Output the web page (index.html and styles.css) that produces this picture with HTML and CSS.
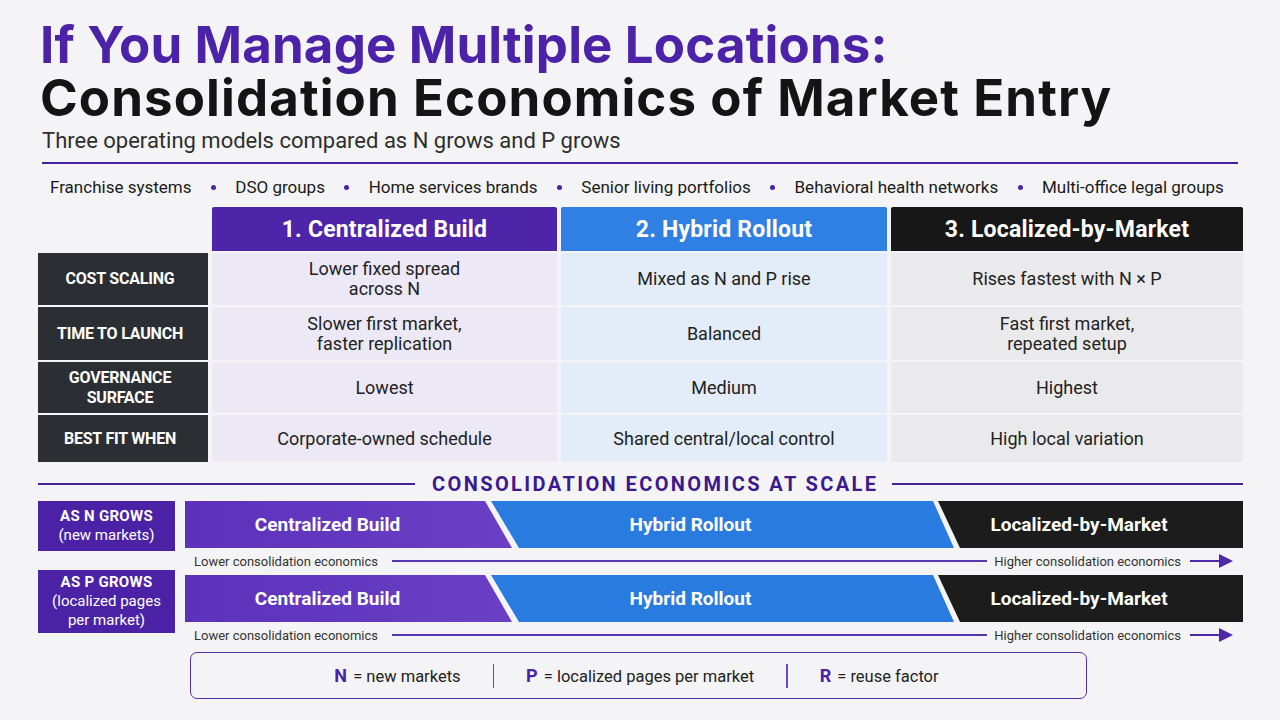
FILE: index.html
```html
<!DOCTYPE html>
<html lang="en">
<head>
<meta charset="utf-8">
<title>Consolidation Economics of Market Entry</title>
<link rel="stylesheet" href="styles.css">
</head>
<body>
<div class="page">
  <h1 class="title"><span class="t1">If You Manage Multiple Locations:</span><span class="t2">Consolidation Economics of Market Entry</span></h1>
  <p class="subtitle">Three operating models compared as N grows and P grows</p>
  <div class="rule"></div>
  <ul class="industries">
    <li>Franchise systems</li><li class="dot"></li>
    <li>DSO groups</li><li class="dot"></li>
    <li>Home services brands</li><li class="dot"></li>
    <li>Senior living portfolios</li><li class="dot"></li>
    <li>Behavioral health networks</li><li class="dot"></li>
    <li>Multi-office legal groups</li>
  </ul>

  <div class="matrix">
    <div class="corner"></div>
    <div class="head h-purple">1. Centralized Build</div>
    <div class="head h-blue">2. Hybrid Rollout</div>
    <div class="head h-black">3. Localized-by-Market</div>

    <div class="label">COST SCALING</div>
    <div class="cell c-purple">Lower fixed spread<br>across N</div>
    <div class="cell c-blue">Mixed as N and P rise</div>
    <div class="cell c-gray">Rises fastest with N × P</div>

    <div class="label">TIME TO LAUNCH</div>
    <div class="cell c-purple">Slower first market,<br>faster replication</div>
    <div class="cell c-blue">Balanced</div>
    <div class="cell c-gray">Fast first market,<br>repeated setup</div>

    <div class="label">GOVERNANCE<br>SURFACE</div>
    <div class="cell c-purple">Lowest</div>
    <div class="cell c-blue">Medium</div>
    <div class="cell c-gray">Highest</div>

    <div class="label">BEST FIT WHEN</div>
    <div class="cell c-purple">Corporate-owned schedule</div>
    <div class="cell c-blue">Shared central/local control</div>
    <div class="cell c-gray">High local variation</div>
  </div>

  <div class="section-head">
    <span class="sh-line sh-left"></span>
    <h2>CONSOLIDATION ECONOMICS AT SCALE</h2>
    <span class="sh-line"></span>
  </div>

  <div class="scale">
    <div class="scale-row row-n">
      <div class="row-label"><b>AS N GROWS</b><span>(new markets)</span></div>
      <div class="track">
        <div class="band">
          <div class="seg seg-c">Centralized Build</div>
          <div class="seg seg-h">Hybrid Rollout</div>
          <div class="seg seg-l">Localized-by-Market</div>
        </div>
        <div class="axis">
          <span>Lower consolidation economics</span>
          <span class="axis-line"></span>
          <span>Higher consolidation economics</span>
          <svg class="arrow" width="44" height="14" viewBox="0 0 44 14"><line x1="0" y1="7" x2="30" y2="7" stroke="#4f28a8" stroke-width="2"/><polygon points="29,0 43,7 29,14" fill="#4f28a8"/></svg>
        </div>
      </div>
    </div>
    <div class="scale-row row-p">
      <div class="row-label"><b>AS P GROWS</b><span>(localized pages<br>per market)</span></div>
      <div class="track">
        <div class="band">
          <div class="seg seg-c">Centralized Build</div>
          <div class="seg seg-h">Hybrid Rollout</div>
          <div class="seg seg-l">Localized-by-Market</div>
        </div>
        <div class="axis">
          <span>Lower consolidation economics</span>
          <span class="axis-line"></span>
          <span>Higher consolidation economics</span>
          <svg class="arrow" width="44" height="14" viewBox="0 0 44 14"><line x1="0" y1="7" x2="30" y2="7" stroke="#4f28a8" stroke-width="2"/><polygon points="29,0 43,7 29,14" fill="#4f28a8"/></svg>
        </div>
      </div>
    </div>
  </div>

  <div class="legend">
    <div class="lg-item"><b>N</b> = new markets</div>
    <span class="lg-div"></span>
    <div class="lg-item"><b>P</b> = localized pages per market</div>
    <span class="lg-div"></span>
    <div class="lg-item"><b>R</b> = reuse factor</div>
  </div>
</div>
</body>
</html>
```

FILE: styles.css
```css
* { box-sizing: border-box; }
html, body { margin: 0; padding: 0; }
body {
  background: #f4f4f6;
  font-family: Roboto, "Liberation Sans", Arial, sans-serif;
  color: #222;
  width: 1280px;
  height: 720px;
  overflow: hidden;
}
.page {
  padding: 18px 37px 0 38px;
}
.title {
  margin: 0;
  font-family: Inter, "Noto Sans", sans-serif;
  font-weight: 700;
  font-size: 51px;
  line-height: 53px;
  padding-left: 2px;
}
.title span { display: block; white-space: nowrap; }
.t1 { color: #4b22a8; letter-spacing: 0.15px; }
.t2 { color: #141414; letter-spacing: 1.1px; }
.subtitle {
  margin: 4px 0 0 4px;
  font-size: 22px;
  line-height: 26px;
  color: #2e2e2e;
}
.rule {
  height: 2px;
  background: #4a1f9e;
  margin: 8px 5px 0 4px;
}
.industries {
  list-style: none;
  margin: 13px 19px 0 12px;
  padding: 0;
  display: flex;
  justify-content: space-between;
  align-items: center;
  font-size: 17px;
  line-height: 20px;
  color: #1a1a1a;
}
.industries .dot {
  width: 5px;
  height: 5px;
  border-radius: 50%;
  background: #4b22a8;
}

/* matrix */
.matrix {
  margin-top: 10px;
  display: grid;
  grid-template-columns: 170px 345px 326px 352px;
  grid-template-rows: 44px 52px 53px 51px 47px;
  column-gap: 4px;
  row-gap: 2px;
}
.head {
  display: flex;
  align-items: center;
  justify-content: center;
  color: #fff;
  font-weight: 700;
  font-size: 23px;
  letter-spacing: 0.2px;
  border-radius: 2px 2px 0 0;
}
.h-purple { background: #4e25a8; }
.h-blue { background: #2f80e2; }
.h-black { background: #171717; }
.label {
  background: #2b2f33;
  color: #fff;
  font-weight: 700;
  font-size: 16px;
  line-height: 20px;
  text-align: center;
  display: flex;
  align-items: center;
  justify-content: center;
  letter-spacing: -0.2px;
  padding-right: 6px;
}
.cell {
  display: flex;
  align-items: center;
  justify-content: center;
  text-align: center;
  font-size: 18px;
  line-height: 20px;
  color: #222;
}
.c-purple { background: #ece8f6; }
.c-blue { background: #e3edf9; }
.c-gray { background: #eaeaec; }

/* section heading */
.section-head {
  margin-top: 10px;
  display: flex;
  align-items: center;
}
.sh-line {
  flex: 1;
  height: 2px;
  background: #4a1f9e;
}
.sh-left {
  flex: 0 0 377px;
  margin-right: 17px;
}
.section-head h2 {
  margin: 0 14px 0 0;
  font-size: 20px;
  line-height: 24px;
  font-weight: 700;
  letter-spacing: 2.4px;
  color: #3c1a8e;
}

/* scale rows */
.scale { margin-top: 5px; }
.scale-row {
  display: grid;
  grid-template-columns: 137px 1058px;
  column-gap: 10px;
  align-items: start;
}
.row-label {
  background: #4b22a6;
  color: #fff;
  display: flex;
  flex-direction: column;
  justify-content: center;
  align-items: center;
  text-align: center;
  font-size: 15px;
  line-height: 19px;
}
.row-label b { font-weight: 700; letter-spacing: 0.3px; }
.row-n .row-label { height: 50px; }
.row-p .row-label { height: 63px; }
.row-n { height: 69px; }
.row-p .track { padding-top: 5px; }

.band {
  display: flex;
  height: 47px;
}
.seg {
  display: flex;
  align-items: center;
  justify-content: center;
  color: #fff;
  font-weight: 700;
  font-size: 19px;
}
.seg-c {
  width: 327px;
  background: linear-gradient(90deg, #5d31bb, #6a40c6);
  clip-path: polygon(0 0, 300px 0, 100% 100%, 0 100%);
  padding-right: 42px;
}
.seg-h {
  width: 463px;
  margin-left: -21px;
  background: #2a7be0;
  clip-path: polygon(0 0, 442px 0, 100% 100%, 28px 100%);
  padding: 0 74px 0 10px;
}
.seg-l {
  flex: 1;
  margin-left: -16px;
  background: #1c1c1c;
  clip-path: polygon(0 0, 100% 0, 100% 100%, 22px 100%);
  padding: 0 43px 0 20px;
}
.axis {
  display: flex;
  align-items: center;
  height: 26px;
  padding: 0 9px 0 9px;
  font-size: 13px;
  color: #333;
  gap: 7px;
}
.axis-line {
  flex: 1;
  height: 2px;
  background: #5a35b0;
  margin-left: 7px;
}
.arrow { display: block; margin-left: 2px; }

/* legend */
.legend {
  margin: 4px 0 0 152px;
  width: 897px;
  height: 47px;
  border: 1.5px solid #5330ad;
  border-radius: 7px;
  display: flex;
  align-items: center;
  justify-content: center;
  gap: 32px;
  font-size: 16.5px;
  color: #222;
  padding-right: 4px;
}
.lg-item b {
  color: #4b22a8;
  font-size: 18px;
  font-weight: 700;
  margin-right: 2px;
}
.lg-div {
  width: 1.5px;
  height: 24px;
  background: #6a4bbf;
}
```
